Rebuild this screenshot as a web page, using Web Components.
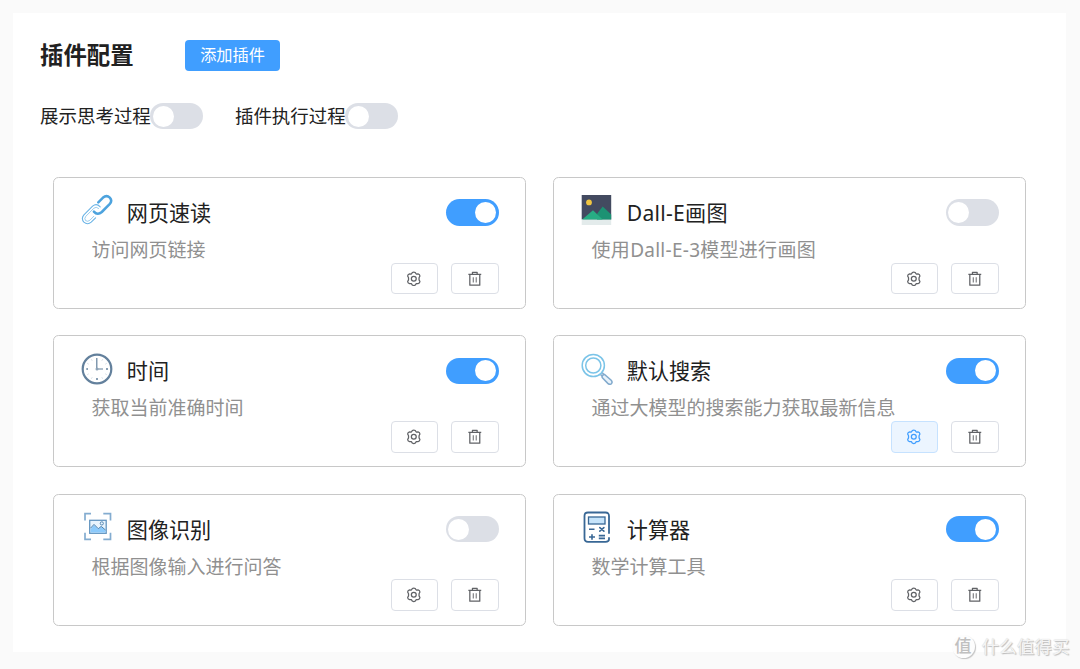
<!DOCTYPE html>
<html lang="zh-CN">
<head>
<meta charset="utf-8">
<title>插件配置</title>
<style>
    html, body {
        margin: 0;
        height: 669px;
        overflow: hidden;
        background: #fafafa;
        color: #212121;
        font-family: "Noto Sans", "Noto Sans CJK SC", sans-serif;
    }
</style>
</head>
<body>
<plugin-page></plugin-page>

<script>
const ICONS = {
    link: `
        <g fill="none" stroke-linecap="round" stroke-linejoin="round">
            <path d="M17.3 8.3 L21.8 3.8 Q25.6 0.6 28.8 3.6 Q31.7 6.8 28.6 10.2 L20.8 18 Q16.6 21.8 12.9 17.6" stroke="#4da3de" stroke-width="2.5"/>
            <path d="M19.2 12.9 Q15.5 8.8 11.6 12.2 L2.9 20.9 Q-0.2 24.5 2.9 28.2 Q6.6 31.4 10.2 28.2 L14.6 23.8" stroke="#6bb4e6" stroke-width="1.1"/>
            <path d="M17.6 14.4 Q15 12.2 12.9 14.2 L4.8 22.3 Q2.9 24.7 4.6 26.6 Q6.8 28.2 8.9 26.2 L12.8 22.3" stroke="#7fbfe9" stroke-width="0.8"/>
        </g>`,
    picture: `
        <rect x="0.7" y="1" width="29.5" height="24.5" fill="#434a60"/>
        <rect x="0.7" y="25.5" width="29.5" height="5.5" fill="#e3ebeb"/>
        <circle cx="8" cy="8.4" r="2.9" fill="#f0c541"/>
        <path d="M16.3 19.5 L21.7 12.5 L30.2 20.5 V25.5 H16 Z" fill="#1c9273"/>
        <path d="M1.2 25.5 L12 16.2 L21.6 25.5 Z" fill="#27ad84"/>`,
    clock: `
        <g fill="none" stroke="#63809c">
            <circle cx="16" cy="16" r="14.3" stroke-width="2.2"/>
            <path d="M15.8 5 V16 H22" stroke-width="1.2"/>
            <path d="M5.3 16 H7 M25 16 H27 M16 25 V27" stroke-width="1.5"/>
            <path d="M10.5 6.6 L11 7.4 M6.6 10.5 L7.4 11 M21.5 6.6 L21 7.4 M25.4 10.5 L24.6 11 M6.6 21.5 L7.4 21 M10.5 25.4 L11 24.6 M25.4 21.5 L24.6 21 M21.5 25.4 L21 24.6" stroke-width="0.8" stroke="#9db0c2"/>
        </g>
        <circle cx="16" cy="16" r="1.5" fill="#8da3b7"/>`,
    search: `
        <g fill="none" stroke="#7bc4e8" stroke-width="1.5">
            <circle cx="12.3" cy="12.5" r="11.1"/>
            <circle cx="12.3" cy="12.5" r="7.6"/>
            <path d="M19.6 21.6 L21.5 23.3 M21.3 19.8 L23.2 21.7" stroke="#82aacd"/>
            <path d="M21.6 22.5 Q22.3 21.3 23.8 21.6 L30.2 27.3 Q31.9 29.3 30.3 30.8 Q28.6 32 26.8 30.4 L21.4 24.9 Q20.6 23.6 21.6 22.5 Z" fill="#e8f2fa" stroke="#82aacd"/>
        </g>`,
    scan: `
        <g fill="none" stroke="#83acd0" stroke-width="1.7">
            <path d="M10 2.7 H4 V9.5 M22.3 2.7 H29.5 V9.5 M4 21.7 V28.3 H10 M29.5 21.7 V28.3 H22.3"/>
        </g>
        <rect x="8.7" y="9.3" width="16.5" height="13" fill="#e9f4fd" stroke="#6395c0" stroke-width="1.3"/>
        <path d="M9.5 18.2 L13 14 L17.3 18 L20.2 15.8 L24.5 19.5 V21.6 H9.5 Z" fill="#8ccafb"/>
        <path d="M9.5 17.2 L13 13.4 L17.3 17.7 L20.2 15.4 L24.5 19" fill="none" stroke="#4d80ad"/>
        <circle cx="20.8" cy="12.4" r="1.6" fill="none" stroke="#4d80ad" stroke-width=".9"/>`,
    calculator: `
        <g fill="none" stroke="#386795" stroke-width="1.8" stroke-linecap="round">
            <path d="M28 22 V5 Q28 1.5 24.5 1.5 H7 Q3.5 1.5 3.5 5 V27.3 Q3.5 30.8 7 30.8 H24.5 Q28 30.8 28 28.3 V27"/>
            <rect x="7.5" y="6" width="16.5" height="7" fill="#c6e4fb" stroke-width="1.3"/>
            <path d="M8 18.3 H13.5 M8 26 H14 M11 23.2 V28.8 M17.8 24.6 H24 M17.8 27.4 H24" stroke-width="1.6" stroke-linecap="butt"/>
            <path d="M18.8 16.6 L22.9 20.2 M22.9 16.6 L18.8 20.2" stroke-width="1.6"/>
        </g>`
};

// 16px wide action glyphs
const ACTIONS = {
    setting: `
        <path d="M6.5 1.6 Q8 0.6 9.5 1.6 L10.5 3.1 L12.4 3 Q14.2 3.4 14.3 5.2 L13.4 6.9 V9.1 L14.3 10.8 Q14.2 12.6 12.4 13 L10.5 12.9 L9.5 14.4 Q8 15.4 6.5 14.4 L5.5 12.9 L3.6 13 Q1.8 12.6 1.7 10.8 L2.6 9.1 V6.9 L1.7 5.2 Q1.8 3.4 3.6 3 L5.5 3.1 Z"/>
        <circle cx="8" cy="8" r="2.5"/>`,
    remove: `
        <path d="M1.4 3.5 H14.6 M5.6 3.3 V1.3 H10.4 V3.3 M2.9 3.6 V14.5 H13.1 V3.6"/>
        <path d="M6.5 6.3 V11.8 M9.5 6.3 V11.8" opacity=".75"/>`
};

class ToggleSwitch extends HTMLElement {
    constructor() {
        super();
        this.attachShadow({ mode: 'open' });
    }

    connectedCallback() {
        this.shadowRoot.innerHTML = `
            <style>
                :host {
                    display: flex;
                    flex: none;
                    align-items: center;
                    box-sizing: border-box;
                    width: 52.8px;
                    height: 26.4px;
                    padding: 0 2.4px;
                    border-radius: 14px;
                    background: #dcdfe6;
                }
                :host([checked]) {
                    justify-content: flex-end;
                    background: #409eff;
                }
                span {
                    width: 21.2px;
                    height: 21.2px;
                    border-radius: 50%;
                    background: #fff;
                }
            </style>
            <span></span>
        `;
    }
}

class ActionButton extends HTMLElement {
    constructor() {
        super();
        this.attachShadow({ mode: 'open' });
    }

    connectedCallback() {
        this.shadowRoot.innerHTML = `
            <style>
                :host {
                    display: flex;
                    align-items: center;
                    justify-content: center;
                    box-sizing: border-box;
                    width: 47.5px;
                    height: 31.7px;
                    border: 1.3px solid #dcdfe6;
                    border-radius: 4px;
                    background: #fff;
                    color: #606266;
                }
                :host([active]) {
                    border-color: #c6e2ff;
                    background: #ecf5ff;
                    color: #409eff;
                }
                svg {
                    width: 15.6px;
                    height: 15.6px;
                    fill: none;
                    stroke: currentColor;
                    stroke-width: 1.3;
                    stroke-linejoin: round;
                }
            </style>
            <svg viewBox="0 0 16 16">${ACTIONS[this.getAttribute('icon')]}</svg>
        `;
    }
}

class PluginCard extends HTMLElement {
    constructor() {
        super();
        this.attachShadow({ mode: 'open' });
    }

    connectedCallback() {
        const checked = this.hasAttribute('checked') ? 'checked' : '';
        const active = this.hasAttribute('active') ? 'active' : '';

        this.shadowRoot.innerHTML = `
            <style>
                :host {
                    display: block;
                    box-sizing: border-box;
                    padding: 16.5px 26.3px 0 27px;
                    border: 1.3px solid #c8c8c8;
                    border-radius: 5.5px;
                    background: #fff;
                }
                header {
                    display: flex;
                    align-items: center;
                    height: 32px;
                }
                svg {
                    flex: none;
                    width: 32px;
                    height: 32px;
                    margin-right: 14px;
                }
                h3 {
                    flex: 1;
                    margin: 0;
                    padding-top: 4.8px;
                    font-size: 21.12px;
                    line-height: 28px;
                    font-weight: 400;
                }
                toggle-switch {
                    margin-top: 4px;
                }
                p {
                    margin: 11.5px 0 0 10.8px;
                    color: #909090;
                    font-size: 19px;
                    line-height: 24px;
                    white-space: nowrap;
                }
                footer {
                    display: flex;
                    justify-content: flex-end;
                    gap: 13px;
                    margin-top: 0.6px;
                }
            </style>
            <header>
                <svg viewBox="0 0 32 32">${ICONS[this.getAttribute('icon')]}</svg>
                <h3>${this.getAttribute('name')}</h3>
                <toggle-switch ${checked}></toggle-switch>
            </header>
            <p><slot></slot></p>
            <footer>
                <action-button icon="setting" ${active}></action-button>
                <action-button icon="remove"></action-button>
            </footer>
        `;
    }
}

class SiteMark extends HTMLElement {
    constructor() {
        super();
        this.attachShadow({ mode: 'open' });
    }

    connectedCallback() {
        this.shadowRoot.innerHTML = `
            <style>
                :host {
                    display: flex;
                    align-items: center;
                    gap: 7px;
                    color: #f4f4f4;
                    font-size: 17.6px;
                    line-height: 24px;
                    text-shadow: 1px 1px 1px #bbb, 0 0 1px #ccc;
                }
                b {
                    box-sizing: border-box;
                    width: 23px;
                    height: 23px;
                    border-radius: 50%;
                    box-shadow: 1px 1px 1px #c4c4c4;
                    background: #fdfdfd;
                    color: #c0c0c0;
                    font-size: 17px;
                    line-height: 22px;
                    font-weight: 500;
                    text-align: center;
                    text-shadow: none;
                }
            </style>
            <b>值</b><span><slot></slot></span>
        `;
    }
}

class PluginPage extends HTMLElement {
    constructor() {
        super();
        this.attachShadow({ mode: 'open' });
    }

    connectedCallback() {
        this.shadowRoot.innerHTML = `
            <style>
                :host {
                    display: block;
                    box-sizing: border-box;
                    height: 669px;
                    padding: 13px 14.5px 17px 13px;
                }
                main {
                    box-sizing: border-box;
                    height: 639px;
                    padding: 26.4px 27px 0;
                    background: #fff;
                }
                .title {
                    display: flex;
                    align-items: center;
                    height: 32px;
                }
                h1 {
                    margin: 0 51px 0.8px 0;
                    font-size: 23.4px;
                    line-height: 32px;
                    font-weight: 700;
                }
                button {
                    width: 95px;
                    height: 31.7px;
                    padding: 0 0 0 1px;
                    border: 0;
                    border-radius: 4px;
                    background: #409eff;
                    color: #fff;
                    font: 16.2px/29px "Noto Sans", "Noto Sans CJK SC", sans-serif;
                }
                .options {
                    display: flex;
                    gap: 31.7px;
                    margin-top: 31.6px;
                }
                label {
                    display: flex;
                    align-items: center;
                    height: 26.4px;
                    font-size: 18.48px;
                    line-height: 26px;
                }
                label toggle-switch {
                    margin-left: -0.4px;
                }
                .cards {
                    display: grid;
                    grid-template-columns: 473px 473px;
                    grid-auto-rows: 132px;
                    gap: 26.4px 27px;
                    margin: 47.6px 0 0 12.8px;
                }
                [icon="picture"] {
                    letter-spacing: 0.27px;
                }
                site-mark {
                    position: absolute;
                    left: 951.5px;
                    top: 634px;
                }
            </style>
            <main>
                <div class="title">
                    <h1>插件配置</h1>
                    <button>添加插件</button>
                </div>
                <div class="options">
                    <label>展示思考过程<toggle-switch></toggle-switch></label>
                    <label>插件执行过程<toggle-switch></toggle-switch></label>
                </div>
                <div class="cards">
                    <plugin-card icon="link" name="网页速读" checked>访问网页链接</plugin-card>
                    <plugin-card icon="picture" name="Dall-E画图">使用Dall-E-3模型进行画图</plugin-card>
                    <plugin-card icon="clock" name="时间" checked>获取当前准确时间</plugin-card>
                    <plugin-card icon="search" name="默认搜索" checked active>通过大模型的搜索能力获取最新信息</plugin-card>
                    <plugin-card icon="scan" name="图像识别">根据图像输入进行问答</plugin-card>
                    <plugin-card icon="calculator" name="计算器" checked>数学计算工具</plugin-card>
                </div>
            </main>
            <site-mark>什么值得买</site-mark>
        `;
    }
}

customElements.define('toggle-switch', ToggleSwitch);
customElements.define('action-button', ActionButton);
customElements.define('plugin-card', PluginCard);
customElements.define('site-mark', SiteMark);
customElements.define('plugin-page', PluginPage);
</script>
</body>
</html>
